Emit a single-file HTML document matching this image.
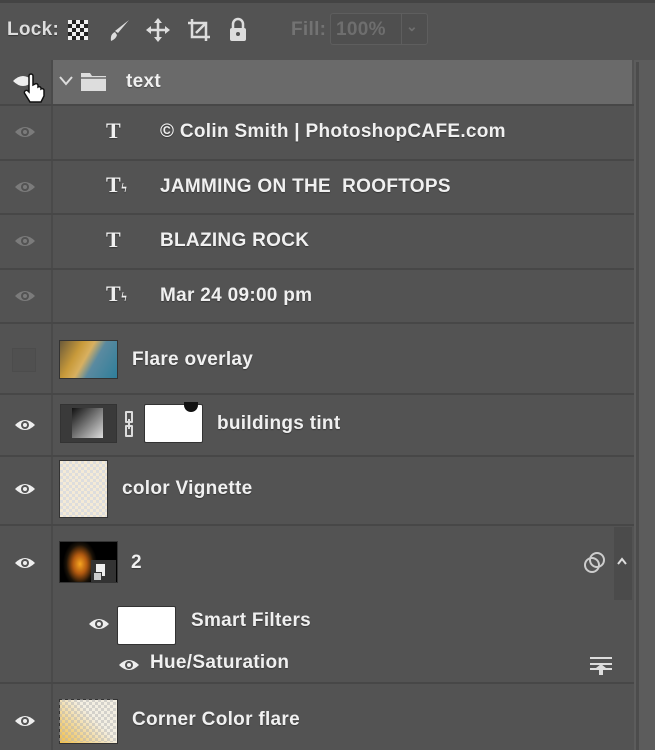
<!DOCTYPE html><html><head><style>
body{margin:0;width:655px;height:750px;background:#535353;position:relative;overflow:hidden;font-family:"Liberation Sans",sans-serif;color:#f0f0f0}
.a{position:absolute}
.t{position:absolute;font-size:19px;white-space:nowrap;font-weight:bold;letter-spacing:0.3px;text-shadow:0 1px 1px rgba(0,0,0,.35)}
.hl{background:#474747}
.eye{position:absolute;width:22px;height:16px}
</style></head><body>
<div class="a" style="left:0;top:0;width:655px;height:3px;background:#444"></div>
<div class="t" style="left:7px;top:19px;color:#ddd">Lock:</div>
<div class="a" style="left:68px;top:20px;width:20px;height:20px;background:#eee;background-image:conic-gradient(#222 25%,#eee 0 50%,#222 0 75%,#eee 0);background-size:8px 8px"></div>
<svg class="a" style="left:106px;top:17px" width="26" height="26"><path d="M23 3 L12 16 L9 14 Z" fill="#ddd"/><path d="M9 15 Q4 17 5 24 Q10 22 11 18Z" fill="#ddd"/></svg>
<svg class="a" style="left:145px;top:17px" width="26" height="26" stroke="#ddd" stroke-width="2.5" fill="#ddd"><path d="M13 3V23M3 13H23" fill="none"/><path d="M13 1l4 5h-8zM13 25l4-5h-8zM1 13l5-4v8zM25 13l-5-4v8z" stroke="none"/></svg>
<svg class="a" style="left:186px;top:17px" width="26" height="26" stroke="#ddd" stroke-width="2.5" fill="none"><path d="M6 2V20H24M2 6H20V24"/><path d="M10 16L20 6"/></svg>
<svg class="a" style="left:227px;top:17px" width="22" height="26"><path d="M6 11V7a5 5 0 0110 0v4" stroke="#ddd" stroke-width="2.5" fill="none"/><rect x="3" y="11" width="16" height="13" rx="2" fill="#ddd"/><circle cx="11" cy="17" r="2" fill="#535353"/></svg>
<div class="t" style="left:291px;top:19px;color:#737373;text-shadow:none">Fill:</div>
<div class="a" style="left:330px;top:13px;width:96px;height:30px;border:1px solid #5e5e5e;border-radius:3px;background:#4f4f4f"></div>
<div class="a" style="left:401px;top:13px;width:1px;height:32px;background:#5e5e5e"></div>
<div class="t" style="left:336px;top:19px;color:#6e6e6e;text-shadow:none">100%</div>
<div class="t" style="left:406px;top:18px;color:#6e6e6e;font-size:14px;text-shadow:none">⌄</div>

<div class="a" style="left:51px;top:60px;width:2px;height:690px;background:#4a4a4a"></div>
<div class="a" style="left:634px;top:60px;width:21px;height:690px;background:#5c5c5c"></div>
<div class="a" style="left:636px;top:62px;width:3px;height:688px;background:#4c4c4c"></div>
<div class="a" style="left:614px;top:527px;width:18px;height:73px;background:#4b4b4b"></div>

<div class="a hl" style="left:0;top:104px;width:634px;height:2px"></div>
<div class="a hl" style="left:0;top:159px;width:634px;height:2px"></div>
<div class="a hl" style="left:0;top:213px;width:634px;height:2px"></div>
<div class="a hl" style="left:0;top:268px;width:634px;height:2px"></div>
<div class="a hl" style="left:0;top:322px;width:634px;height:2px"></div>
<div class="a hl" style="left:0;top:393px;width:634px;height:2px"></div>
<div class="a hl" style="left:0;top:455px;width:634px;height:2px"></div>
<div class="a hl" style="left:0;top:524px;width:634px;height:2px"></div>
<div class="a hl" style="left:0;top:682px;width:634px;height:2px"></div>

<div class="a" style="left:53px;top:60px;width:579px;height:44px;background:#6a6a6a"></div>
<svg class="a" style="left:58px;top:74px" width="16" height="14"><path d="M2 3L8 10L14 3" stroke="#ddd" stroke-width="2" fill="none"/></svg>
<svg class="a" style="left:80px;top:71px" width="28" height="22"><path d="M1 2H10L12 5H26V20H1Z" fill="#ddd"/><path d="M1 7H26" stroke="#6a6a6a" stroke-width="1.5"/></svg>
<div class="t" style="left:126px;top:71px">text</div>
<svg width="0" height="0" style="position:absolute"><defs><g id="e"><path d="M1 8Q11 -2 21 8Q11 18 1 8Z" fill="currentColor"/><circle cx="11" cy="8" r="4" fill="#535353"/><circle cx="11" cy="8" r="2" fill="currentColor"/></g></defs></svg>
<svg class="a" style="left:12px;top:72px;color:#eee" width="40" height="40"><path d="M1 9Q11 -1 21 9Q11 19 1 9Z" fill="#eee"/><path d="M17 14V4a2 2 0 014 0v9l2-1a2 2 0 013 1v2a2 2 0 013 1v1a2 2 0 013 1v6l-3 6H18l-5-8a2 2 0 013-3l1 1z" fill="#fff" stroke="#111" stroke-width="1.5"/></svg>

<svg class="eye" style="left:14px;top:124px;color:#7b7b7b"><use href="#e"/></svg>
<svg class="eye" style="left:14px;top:179px;color:#7b7b7b"><use href="#e"/></svg>
<svg class="eye" style="left:14px;top:233px;color:#7b7b7b"><use href="#e"/></svg>
<svg class="eye" style="left:14px;top:288px;color:#7b7b7b"><use href="#e"/></svg>
<div class="a" style="left:12px;top:348px;width:22px;height:22px;border:1px solid #4c4c4c;background:#505050"></div>
<svg class="eye" style="left:14px;top:417px;color:#eee"><use href="#e"/></svg>
<svg class="eye" style="left:14px;top:481px;color:#eee"><use href="#e"/></svg>
<svg class="eye" style="left:14px;top:555px;color:#eee"><use href="#e"/></svg>
<svg class="eye" style="left:88px;top:616px;color:#eee"><use href="#e"/></svg>
<svg class="eye" style="left:118px;top:657px;color:#eee"><use href="#e"/></svg>
<svg class="eye" style="left:14px;top:713px;color:#eee"><use href="#e"/></svg>

<div class="t" style="left:106px;top:118px;font-family:'Liberation Serif',serif;font-size:22px">T</div>
<div class="t" style="left:160px;top:121px">© Colin Smith | PhotoshopCAFE.com</div>
<div class="t" style="left:106px;top:172px;font-family:'Liberation Serif',serif;font-size:22px">T<span style="font-size:13px">ϟ</span></div>
<div class="t" style="left:160px;top:176px">JAMMING ON THE&nbsp; ROOFTOPS</div>
<div class="t" style="left:106px;top:227px;font-family:'Liberation Serif',serif;font-size:22px">T</div>
<div class="t" style="left:160px;top:230px">BLAZING ROCK</div>
<div class="t" style="left:106px;top:281px;font-family:'Liberation Serif',serif;font-size:22px">T<span style="font-size:13px">ϟ</span></div>
<div class="t" style="left:160px;top:285px">Mar 24 09:00 pm</div>

<div class="a" style="left:59px;top:340px;width:57px;height:37px;border:1px solid #333;background:linear-gradient(120deg,#6b5a3a,#c89a3a 30%,#d8b060 45%,#5a8aa0 60%,#2e7e9a)"></div>
<div class="t" style="left:132px;top:349px">Flare overlay</div>

<div class="a" style="left:60px;top:404px;width:55px;height:37px;border:1px solid #333;background:#3a3a3a"></div>
<div class="a" style="left:72px;top:408px;width:31px;height:30px;background:linear-gradient(135deg,#111,#ddd)"></div>
<svg class="a" style="left:122px;top:410px" width="14" height="28"><path d="M4 2h6v10h-6zM4 16h6v10h-6zM7 9v10" stroke="#ddd" stroke-width="2" fill="none" stroke-linejoin="round"/></svg>
<div class="a" style="left:144px;top:404px;width:57px;height:37px;border:1px solid #333;background:#fff;border-radius:2px"></div>
<div class="a" style="left:184px;top:402px;width:14px;height:10px;border-radius:0 0 8px 8px;background:#111"></div>
<div class="t" style="left:217px;top:413px">buildings tint</div>

<div class="a" style="left:59px;top:460px;width:47px;height:56px;border:1px solid #333;background-color:#f4ead6;background-image:conic-gradient(#ddd 25%,transparent 0 50%,#ddd 0 75%,transparent 0);background-size:6px 6px"></div>
<div class="t" style="left:122px;top:478px">color Vignette</div>

<div class="a" style="left:59px;top:541px;width:57px;height:40px;border:1px solid #333;background:radial-gradient(ellipse 30% 60% at 35% 55%,#f7a520 0,#b35a10 40%,#1a1208 80%,#000 100%)"></div>
<div class="a" style="left:91px;top:560px;width:25px;height:22px;background:#333"></div>
<div class="a" style="left:96px;top:564px;width:9px;height:12px;background:#eee"></div>
<div class="a" style="left:93px;top:572px;width:7px;height:7px;background:#ccc;border:1px solid #333"></div>
<div class="t" style="left:131px;top:552px">2</div>
<svg class="a" style="left:583px;top:551px" width="24" height="24" stroke="#ccc" stroke-width="2" fill="none"><circle cx="9" cy="14" r="7"/><circle cx="14" cy="9" r="7"/></svg>
<svg class="a" style="left:616px;top:556px" width="12" height="10"><path d="M2 8L6 3L10 8" stroke="#ddd" stroke-width="2" fill="none"/></svg>
<div class="a" style="left:117px;top:606px;width:57px;height:37px;border:1px solid #333;background:#fff;border-radius:2px"></div>
<div class="t" style="left:191px;top:610px">Smart Filters</div>
<div class="t" style="left:150px;top:652px">Hue/Saturation</div>
<svg class="a" style="left:590px;top:656px" width="22" height="20" fill="#ddd"><rect x="0" y="1" width="22" height="2"/><rect x="0" y="7" width="22" height="2"/><path d="M6 12h10l-5-4z"/><rect x="0" y="12" width="22" height="2"/><rect x="9" y="14" width="4" height="5"/></svg>

<div class="a" style="left:59px;top:699px;width:57px;height:43px;border:1px solid #333;background:linear-gradient(45deg,#f2c04a,rgba(255,240,200,0.3) 60%),#eee;"></div>
<div class="a" style="left:59px;top:699px;width:57px;height:43px;background-image:conic-gradient(rgba(180,180,180,.5) 25%,transparent 0 50%,rgba(180,180,180,.5) 0 75%,transparent 0);background-size:6px 6px"></div>
<div class="t" style="left:132px;top:709px">Corner Color flare</div>
</body></html>
